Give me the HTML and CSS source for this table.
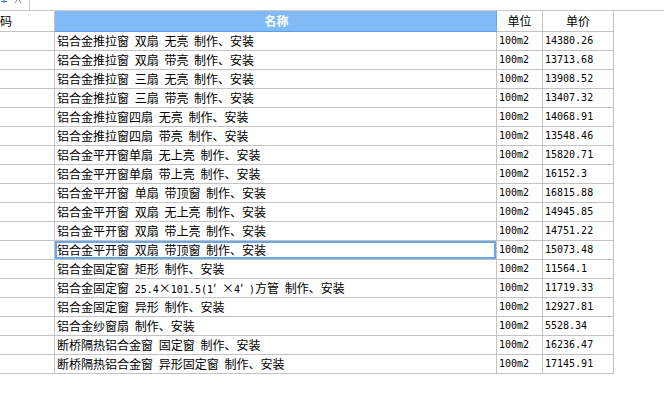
FILE: index.html
```html
<!DOCTYPE html>
<html lang="zh">
<head>
<meta charset="utf-8">
<link rel="stylesheet" href="styles.css">
</head>
<body>
<div class="topbar">
  <svg class="tabfrag" width="30" height="10" viewBox="0 0 30 10">
    <path d="M1 1.5H7.5M4 0V3" stroke="#3b82e0" stroke-width="1"/>
    <path d="M15 3L17 0M21 3L19 0" stroke="#8a8a8a" stroke-width="1"/>
    <path d="M29.5 0V10" stroke="#c8c8c8" stroke-width="1"/>
  </svg>
</div>
<div class="grid">
  <div class="row head">
    <div class="cell code">编码</div>
    <div class="cell name">名称</div>
    <div class="cell unit">单位</div>
    <div class="cell price">单价</div>
  </div>
  <div class="row"><div class="cell code"></div><div class="cell name">铝合金推拉窗 双扇 无亮 制作、安装</div><div class="cell unit">100m2</div><div class="cell price">14380.26</div></div>
  <div class="row"><div class="cell code"></div><div class="cell name">铝合金推拉窗 双扇 带亮 制作、安装</div><div class="cell unit">100m2</div><div class="cell price">13713.68</div></div>
  <div class="row"><div class="cell code"></div><div class="cell name">铝合金推拉窗 三扇 无亮 制作、安装</div><div class="cell unit">100m2</div><div class="cell price">13908.52</div></div>
  <div class="row"><div class="cell code"></div><div class="cell name">铝合金推拉窗 三扇 带亮 制作、安装</div><div class="cell unit">100m2</div><div class="cell price">13407.32</div></div>
  <div class="row"><div class="cell code"></div><div class="cell name">铝合金推拉窗四扇 无亮 制作、安装</div><div class="cell unit">100m2</div><div class="cell price">14068.91</div></div>
  <div class="row"><div class="cell code"></div><div class="cell name">铝合金推拉窗四扇 带亮 制作、安装</div><div class="cell unit">100m2</div><div class="cell price">13548.46</div></div>
  <div class="row"><div class="cell code"></div><div class="cell name">铝合金平开窗单扇 无上亮 制作、安装</div><div class="cell unit">100m2</div><div class="cell price">15820.71</div></div>
  <div class="row"><div class="cell code"></div><div class="cell name">铝合金平开窗单扇 带上亮 制作、安装</div><div class="cell unit">100m2</div><div class="cell price">16152.3</div></div>
  <div class="row"><div class="cell code"></div><div class="cell name">铝合金平开窗 单扇 带顶窗 制作、安装</div><div class="cell unit">100m2</div><div class="cell price">16815.88</div></div>
  <div class="row"><div class="cell code"></div><div class="cell name">铝合金平开窗 双扇 无上亮 制作、安装</div><div class="cell unit">100m2</div><div class="cell price">14945.85</div></div>
  <div class="row"><div class="cell code"></div><div class="cell name">铝合金平开窗 双扇 带上亮 制作、安装</div><div class="cell unit">100m2</div><div class="cell price">14751.22</div></div>
  <div class="row"><div class="cell code"></div><div class="cell name selected">铝合金平开窗 双扇 带顶窗 制作、安装</div><div class="cell unit">100m2</div><div class="cell price">15073.48</div></div>
  <div class="row"><div class="cell code"></div><div class="cell name">铝合金固定窗 矩形 制作、安装</div><div class="cell unit">100m2</div><div class="cell price">11564.1</div></div>
  <div class="row"><div class="cell code"></div><div class="cell name">铝合金固定窗 <span class="lat">25.4</span>×<span class="lat">101.5(1</span>′ ×<span class="lat">4</span>′ <span class="lat">)</span>方管 制作、安装</div><div class="cell unit">100m2</div><div class="cell price">11719.33</div></div>
  <div class="row"><div class="cell code"></div><div class="cell name">铝合金固定窗 异形 制作、安装</div><div class="cell unit">100m2</div><div class="cell price">12927.81</div></div>
  <div class="row"><div class="cell code"></div><div class="cell name">铝合金纱窗扇 制作、安装</div><div class="cell unit">100m2</div><div class="cell price">5528.34</div></div>
  <div class="row"><div class="cell code"></div><div class="cell name">断桥隔热铝合金窗 固定窗 制作、安装</div><div class="cell unit">100m2</div><div class="cell price">16236.47</div></div>
  <div class="row"><div class="cell code"></div><div class="cell name">断桥隔热铝合金窗 异形固定窗 制作、安装</div><div class="cell unit">100m2</div><div class="cell price">17145.91</div></div>
</div>
</body>
</html>
```
FILE: styles.css
```css
html, body {
  margin: 0;
  padding: 0;
  background: #ffffff;
  width: 664px;
  height: 394px;
  overflow: hidden;
}
body {
  font-family: "Noto Sans CJK SC", "Noto Sans", sans-serif;
  font-size: 12px;
  color: #000;
}
.topbar {
  height: 10px;
  border-bottom: 1px solid #c8c8c8;
  overflow: hidden;
}
.tabfrag {
  display: block;
}
.grid {
  width: 664px;
  overflow: hidden;
}
.row {
  display: grid;
  grid-template-columns: 69px 442px 46px 71px;
  margin-left: -14px;
  height: 19px;
}
.row.head {
  height: 21px;
}
.cell {
  box-sizing: border-box;
  border-right: 1px solid #c3c3c3;
  border-bottom: 1px solid #c3c3c3;
  padding-left: 2px;
  line-height: 18px;
  white-space: nowrap;
  overflow: hidden;
  word-spacing: 3px;
}
.head .cell {
  line-height: 20px;
  text-align: center;
}
.head .code {
  text-align: left;
  padding-left: 2px;
}
.head .name {
  background: #80bbf8;
  color: #ffffff;
  font-weight: bold;
  border-right-color: #6aa6ec;
  border-bottom-color: #5f9de6;
}
.unit, .price {
  font-family: "DejaVu Sans Mono", "Liberation Mono", monospace;
  font-size: 10px;
}
.head .unit, .head .price {
  font-family: "Noto Sans CJK SC", sans-serif;
  font-size: 12px;
  padding-left: 0;
}
.lat {
  font-family: "DejaVu Sans Mono", "Liberation Mono", monospace;
  font-size: 10px;
  word-spacing: 0;
}
.selected {
  box-shadow: inset 0 0 0 2px #6ba6e9;
}
```
